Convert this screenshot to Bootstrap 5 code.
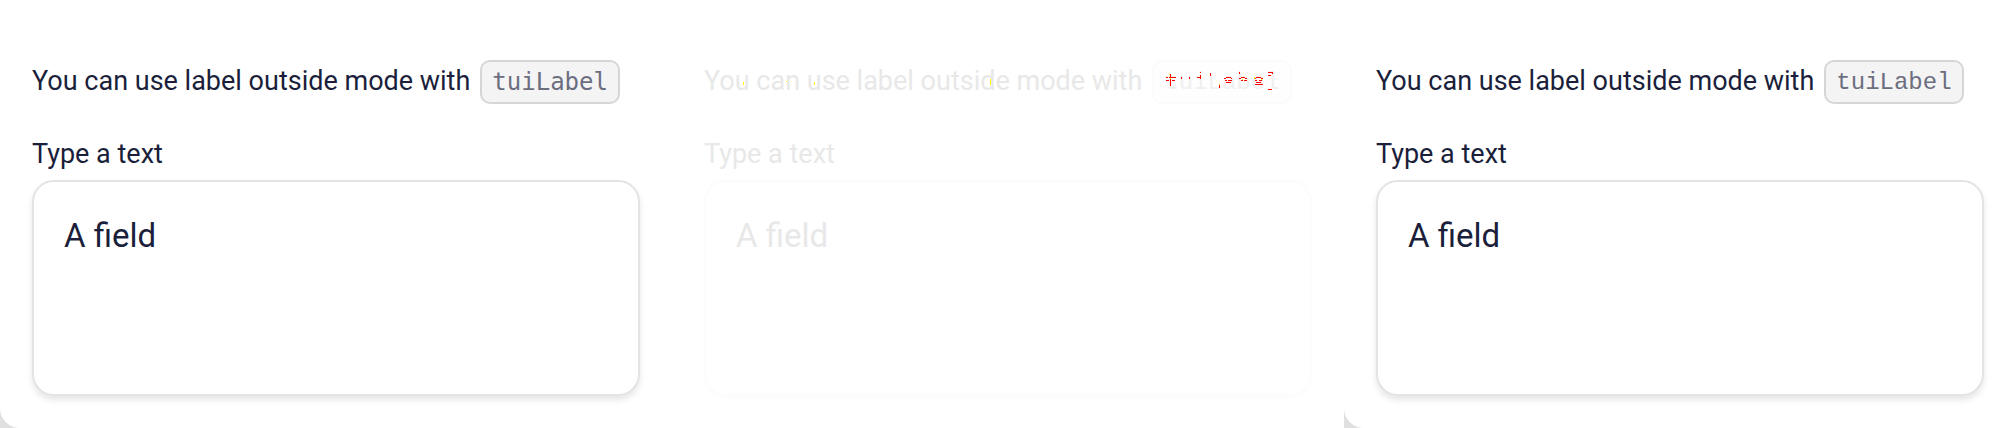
<!DOCTYPE html>
<html lang="en">
<head>
<meta charset="utf-8">
<meta name="viewport" content="width=device-width, initial-scale=1">
<title>Label outside mode</title>
<link href="https://cdn.jsdelivr.net/npm/bootstrap@5.3.0/dist/css/bootstrap.min.css" rel="stylesheet">
<style>
body{background:#fff;color:#1b1f3b;font-family:Roboto,"Liberation Sans",sans-serif}
.panel{padding:58px 32px 32px;background:#fff;border-bottom-left-radius:20px}
.backing{background:#e0e0e0}
.intro{font-size:27px;line-height:48px;margin-bottom:32px}
.intro span{padding-bottom:2px;line-height:46px}
.token{font-family:"DejaVu Sans Mono",monospace;font-size:24px;line-height:28px;color:#6c6e80;background:#f4f4f4;border:2px solid #d6d6d6;border-radius:10px;padding:6px 10px;margin-left:10px}
.token-slab{font-family:"Liberation Mono",monospace;padding:7px 10px 5px}
.caption-text{font-size:27px;line-height:32px;margin-bottom:10px}
.field{height:216px;font-size:33px;line-height:40px;color:#1b1f3b;border:2px solid #e4e4e4;border-radius:22px;padding:34px 30px;resize:none;box-shadow:0 4px 6px rgba(0,0,0,.1)}
.ghost,.ghost .field{color:#e8e8e8}
.ghost .field{border-color:#fcfcfc;box-shadow:0 4px 6px rgba(0,0,0,.01)}
.ghost .token{background:#fefefe;border-color:#fbfbfb;color:#f0f0f0}
.marks{position:absolute;width:124px;height:30px;left:6px;top:4px}
.marks-wide{position:absolute;width:280px;height:30px;left:26px;top:7px}
</style>
</head>
<body>
<main class="container-fluid p-0"><div class="row g-0">
<div class="col-4 backing"><section class="panel"><p class="intro text-nowrap d-flex align-items-center"><span>You can use label outside mode with</span><code class="token">tuiLabel</code></p><label class="caption-text d-block" for="a">Type a text</label><textarea id="a" class="form-control field">A field</textarea></section></div>
<div class="col-4"><section class="panel ghost"><p class="intro text-nowrap d-flex align-items-center position-relative"><span>You can use label outside mode with</span><code class="token token-slab position-relative">tuiLabel<svg class="marks" viewBox="0 0 372 90" fill="red" aria-hidden="true"><path d="M30 24h3v36h-3zM18 33h6v3h-6zM27 33h21v3h-21zM18 42h9v3h-9zM36 42h9v3h-9zM63 33h3v6h-3zM87 33h3v6h-3zM120 18h3v3h-3zM120 27h3v12h-3zM111 33h9v3h-9zM150 21h3v9h-3zM177 57h3v9h-3zM198 33h15v3h-15zM192 36h6v3h-6zM213 36h3v3h-3zM195 42h6v3h-6zM204 42h12v3h-12zM198 48h15v3h-15zM237 18h3v6h-3zM243 33h12v3h-12zM237 36h6v3h-6zM255 36h6v3h-6zM243 42h6v3h-6zM252 42h9v3h-9zM288 33h15v3h-15zM282 36h6v3h-6zM303 36h6v3h-6zM285 42h6v3h-6zM297 42h9v3h-9zM288 48h15v3h-15zM285 54h24v3h-24zM324 18h15v3h-15zM336 21h3v3h-3zM324 27h9v3h-9zM324 69h12v3h-12z"/><path fill="#ff0" d="M27 24h3v3h-3zM30 36h3v3h-3zM177 54h3v3h-3zM246 39h3v3h-3zM282 33h3v6h-3zM303 39h3v3h-3z"/></svg></code><svg class="marks-wide" viewBox="0 0 840 90" fill="#ff0" aria-hidden="true"><path d="M39 51h3v9h-3zM168 48h3v3h-3zM252 51h3v9h-3zM780 42h3v18h-3z"/></svg></p><label class="caption-text d-block" for="b">Type a text</label><textarea id="b" class="form-control field">A field</textarea></section></div>
<div class="col-4 backing"><section class="panel"><p class="intro text-nowrap d-flex align-items-center"><span>You can use label outside mode with</span><code class="token token-slab">tuiLabel</code></p><label class="caption-text d-block" for="c">Type a text</label><textarea id="c" class="form-control field">A field</textarea></section></div>
</div></main>
<script src="https://cdn.jsdelivr.net/npm/bootstrap@5.3.0/dist/js/bootstrap.bundle.min.js"></script>
</body>
</html>
